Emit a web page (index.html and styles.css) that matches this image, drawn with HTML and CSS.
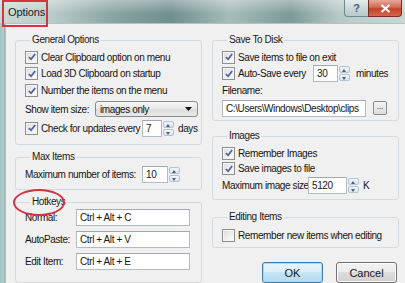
FILE: index.html
```html
<!DOCTYPE html>
<html lang="en">
<head>
    <meta charset="UTF-8">
    <title>Options</title>
    <link rel="stylesheet" href="styles.css">
</head>
<body>
    <div class="window">
        <div class="titlebar">
            <span class="title">Options</span>
            <div class="caption-btns">
                <span class="cap-help">?</span>
                <span class="cap-close">
                    <svg width="11" height="9" viewBox="0 0 11 9"><path d="M1.5 1 L9.5 8 M9.5 1 L1.5 8" stroke="#fff" stroke-width="2.2" fill="none"/></svg>
                </span>
            </div>
        </div>

        <div class="client">
            <div class="col">
                <fieldset class="group general">
                    <legend>General Options</legend>
                    <div class="row r16"><span class="cb on"><svg viewBox="0 0 11 11"><path d="M2 5.5 L4.5 8 L9 2.2" /></svg></span><span>Clear Clipboard option on menu</span></div>
                    <div class="row r17"><span class="cb on"><svg viewBox="0 0 11 11"><path d="M2 5.5 L4.5 8 L9 2.2" /></svg></span><span>Load 3D Clipboard on startup</span></div>
                    <div class="row r17"><span class="cb on"><svg viewBox="0 0 11 11"><path d="M2 5.5 L4.5 8 L9 2.2" /></svg></span><span>Number the items on the menu</span></div>
                    <div class="row r20">
                        <span class="lbl w70">Show item size:</span>
                        <span class="select">images only<svg width="7" height="4" viewBox="0 0 7 4"><path d="M0 0 H7 L3.5 4 Z" fill="#111"/></svg></span>
                    </div>
                    <div class="row r18">
                        <span class="cb on"><svg viewBox="0 0 11 11"><path d="M2 5.5 L4.5 8 L9 2.2" /></svg></span><span class="w101">Check for updates every</span>
                        <span class="field w20">7</span><span class="spin"><i class="up"></i><i class="dn"></i></span>
                        <span class="unit">days</span>
                    </div>
                </fieldset>

                <fieldset class="group maxitems">
                    <legend>Max Items</legend>
                    <div class="row r18">
                        <span class="lbl w117">Maximum number of items:</span>
                        <span class="field w26">10</span><span class="spin"><i class="up"></i><i class="dn"></i></span>
                    </div>
                </fieldset>

                <fieldset class="group hotkeys">
                    <legend>Hotkeys</legend>
                    <div class="row r17"><span class="lbl w51">Normal:</span><span class="field w114">Ctrl + Alt + C</span></div>
                    <div class="row r17"><span class="lbl w51">AutoPaste:</span><span class="field w114">Ctrl + Alt + V</span></div>
                    <div class="row r17"><span class="lbl w51">Edit Item:</span><span class="field w114">Ctrl + Alt + E</span></div>
                </fieldset>
            </div>

            <div class="col">
                <fieldset class="group savedisk">
                    <legend>Save To Disk</legend>
                    <div class="row r16"><span class="cb on"><svg viewBox="0 0 11 11"><path d="M2 5.5 L4.5 8 L9 2.2" /></svg></span><span>Save items to file on exit</span></div>
                    <div class="row r17">
                        <span class="cb on"><svg viewBox="0 0 11 11"><path d="M2 5.5 L4.5 8 L9 2.2" /></svg></span><span class="w75">Auto-Save every</span>
                        <span class="field w25">30</span><span class="spin"><i class="up"></i><i class="dn"></i></span>
                        <span class="unit wide">minutes</span>
                    </div>
                    <div class="row r16"><span class="lbl">Filename:</span></div>
                    <div class="row r20">
                        <span class="field w144">C:\Users\Windows\Desktop\clips</span>
                        <span class="browse">...</span>
                    </div>
                </fieldset>

                <fieldset class="group images">
                    <legend>Images</legend>
                    <div class="row r16"><span class="cb on"><svg viewBox="0 0 11 11"><path d="M2 5.5 L4.5 8 L9 2.2" /></svg></span><span>Remember Images</span></div>
                    <div class="row r15"><span class="cb on"><svg viewBox="0 0 11 11"><path d="M2 5.5 L4.5 8 L9 2.2" /></svg></span><span>Save images to file</span></div>
                    <div class="row r18">
                        <span class="lbl w86">Maximum image size:</span>
                        <span class="field w39">5120</span><span class="spin"><i class="up"></i><i class="dn"></i></span>
                        <span class="unit">K</span>
                    </div>
                </fieldset>

                <fieldset class="group editing">
                    <legend>Editing Items</legend>
                    <div class="row r16"><span class="cb"></span><span>Remember new items when editing</span></div>
                </fieldset>

                <div class="buttons">
                    <span class="btn default">OK</span>
                    <span class="btn">Cancel</span>
                </div>
            </div>
        </div>

        <span class="mark-rect"></span>
        <span class="mark-ellipse"></span>
    </div>
</body>
</html>
```

FILE: styles.css
```css
body {
    margin: 0;
    font-family: "Liberation Sans", Arial, sans-serif;
    font-size: 10px;
    letter-spacing: -0.4px;
    color: #151515;
    background: #f0f0f0;
    overflow: hidden;
}

.window {
    position: relative;
    width: 405px;
    height: 283px;
    display: flex;
    flex-direction: column;
    background: linear-gradient(to right, #a3c2bf 0, #b2cecb 4px, #7c9896 5px, #eef0f0 6px, #f0f0f0 7px);
}

.titlebar {
    height: 24px;
    box-sizing: border-box;
    display: flex;
    align-items: flex-start;
    border-bottom: 1px solid #b4c2c4;
    background:
        linear-gradient(to bottom, rgba(255, 255, 255, 0.35), rgba(255, 255, 255, 0) 60%),
        linear-gradient(to right, #cbd8d5 0, #bccdca 50px, #8ba6a4 110px, #6f8f8d 170px, #a6bcba 230px, #7d9a98 290px, #b8cac8 340px, #c9d6d4 405px);
}

.title {
    padding-left: 8px;
    line-height: 24px;
    font-size: 11px;
    letter-spacing: -0.1px;
    color: #1b1b1b;
}

.caption-btns {
    display: flex;
    margin-left: auto;
    margin-right: 3px;
}

.cap-help, .cap-close {
    height: 17px;
    display: flex;
    align-items: center;
    justify-content: center;
    box-sizing: border-box;
}

.cap-help {
    width: 24px;
    border: 1px solid #6e8a8d;
    border-top: 0;
    border-right: 0;
    border-radius: 0 0 0 4px;
    background: linear-gradient(to bottom, #e4ecec, #c9d7d8 50%, #b9cacb);
    color: #44627a;
    font-weight: bold;
    font-size: 11px;
    letter-spacing: 0;
}

.cap-close {
    width: 34px;
    border: 1px solid #70302a;
    border-top: 0;
    border-radius: 0 0 4px 0;
    background: linear-gradient(to bottom, #e6a89a, #d16b55 45%, #c2412b 55%, #d4684c);
}

.client {
    flex: 1;
    display: flex;
    gap: 10px;
    padding: 10px 0 0 15px;
}

.col {
    width: 187px;
    display: flex;
    flex-direction: column;
}

.group {
    margin: 0;
    padding: 3px 0 0 9px;
    border: 1px solid #d3dadf;
    border-radius: 3px;
    box-sizing: border-box;
    min-width: 0;
}

.group legend {
    margin-left: 5px;
    padding: 0 2px;
    line-height: 12px;
    color: #1a1a1a;
}

.general { padding-bottom: 7px; }
.maxitems { margin-top: 6px; padding-top: 2px; padding-bottom: 6px; }
.hotkeys { margin-top: 6px; padding-top: 1px; padding-bottom: 12px; }
.hotkeys .row + .row { margin-top: 5px; }

.savedisk { padding-bottom: 2px; }
.images { margin-top: 9px; padding-bottom: 5px; }
.editing { margin-top: 11px; padding-top: 4px; padding-bottom: 4px; }

.row {
    display: flex;
    align-items: center;
    white-space: nowrap;
}

.r15 { height: 15px; }
.r16 { height: 16px; }
.r17 { height: 17px; }
.r18 { height: 18px; }
.r20 { height: 20px; }

.w20 { width: 20px; }
.w25 { width: 25px; }
.w26 { width: 26px; }
.w39 { width: 39px; }
.w51 { width: 51px; }
.w70 { width: 70px; }
.w75 { width: 75px; }
.w86 { width: 86px; }
.w101 { width: 101px; }
.w114 { width: 114px; }
.w117 { width: 117px; }
.w144 { width: 144px; }

.lbl { flex: none; }

.cb {
    flex: none;
    width: 13px;
    height: 13px;
    box-sizing: border-box;
    margin-right: 3px;
    border: 1px solid #8e8f8f;
    background: linear-gradient(135deg, #dcdcdc, #fdfdfd);
    box-shadow: inset 0 0 0 1px #f4f4f4;
    display: flex;
    align-items: center;
    justify-content: center;
}

.cb svg {
    width: 10px;
    height: 10px;
}

.cb svg path {
    fill: none;
    stroke: #4b5f9c;
    stroke-width: 1.9;
}

.field {
    flex: none;
    height: 17px;
    box-sizing: border-box;
    padding-left: 3px;
    border: 1px solid #b5b9c0;
    border-top-color: #a3a7ae;
    background: #fff;
    line-height: 15px;
    overflow: hidden;
}

.spin {
    flex: none;
    width: 13px;
    height: 17px;
    box-sizing: border-box;
    display: flex;
    flex-direction: column;
    padding: 1px;
    gap: 1px;
}

.spin i {
    flex: 1;
    border: 1px solid #b4c3d4;
    border-radius: 2px;
    background: linear-gradient(to bottom, #f2f6fb, #d9e4f0);
    position: relative;
}

.spin i::after {
    content: "";
    position: absolute;
    left: 2px;
    top: 2px;
    border-left: 2.5px solid transparent;
    border-right: 2.5px solid transparent;
}

.spin .up::after { border-bottom: 3px solid #4d5e78; }
.spin .dn::after { border-top: 3px solid #4d5e78; }

.unit { margin-left: 3px; }
.unit.wide { margin-left: 5px; }

.select {
    flex: none;
    width: 103px;
    height: 16px;
    box-sizing: border-box;
    padding: 0 5px 0 4px;
    display: flex;
    align-items: center;
    justify-content: space-between;
    border: 1px solid #8b8b8b;
    border-radius: 3px;
    background: linear-gradient(to bottom, #f6f6f6, #e6e6e6 50%, #dcdcdc 51%, #e8e8e8);
}

.browse {
    flex: none;
    width: 14px;
    height: 14px;
    margin-left: 7px;
    box-sizing: border-box;
    border: 1px solid #8a8a8a;
    border-radius: 2px;
    background: linear-gradient(to bottom, #f4f4f4, #dcdcdc);
    font-size: 8px;
    line-height: 10px;
    letter-spacing: 0;
    text-align: center;
}

.buttons {
    display: flex;
    justify-content: flex-end;
    gap: 13px;
    margin-top: 14px;
    padding-right: 2px;
}

.btn {
    width: 61px;
    height: 21px;
    box-sizing: border-box;
    border: 1px solid #707070;
    border-radius: 3px;
    background: linear-gradient(to bottom, #f2f2f2, #ebebeb 45%, #dddddd 50%, #cfcfcf);
    box-shadow: inset 0 0 0 1px #fcfcfc;
    display: flex;
    align-items: center;
    justify-content: center;
    font-size: 11px;
    letter-spacing: 0;
}

.btn.default {
    border-color: #3c7fb1;
    box-shadow: inset 0 0 0 1px #a8daf2;
    background: linear-gradient(to bottom, #eaf5fc, #dbeef9 45%, #c5e4f6 50%, #b6d9ef);
}

.mark-rect {
    position: absolute;
    left: 2px;
    top: 0;
    width: 46px;
    height: 27px;
    box-sizing: border-box;
    border: 2px solid #da3340;
}

.mark-ellipse {
    position: absolute;
    left: 13px;
    top: 189px;
    width: 52px;
    height: 27px;
    box-sizing: border-box;
    border: 2px solid #cf3446;
    border-radius: 50%;
}
```
